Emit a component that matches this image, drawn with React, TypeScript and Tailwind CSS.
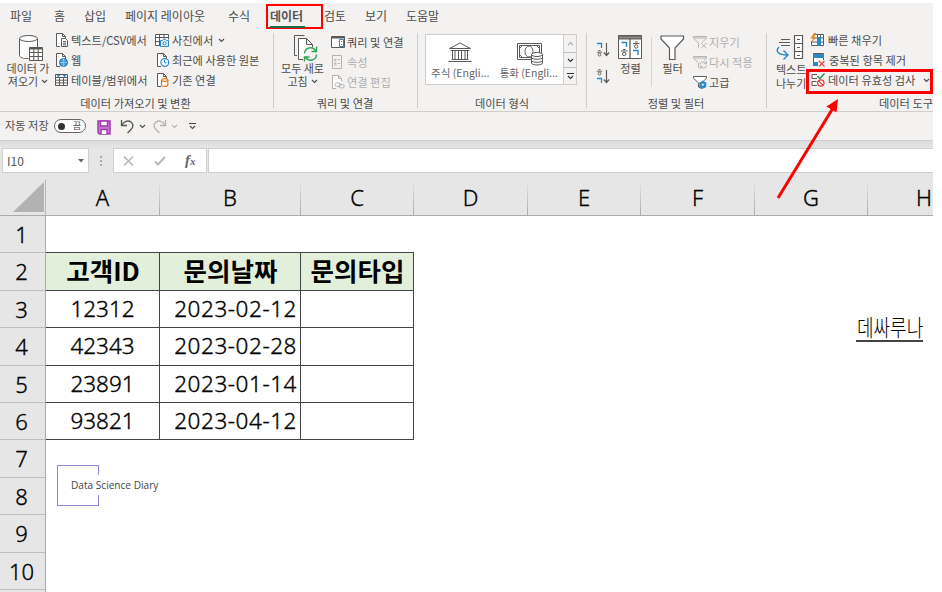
import React from 'react';
import clsx from 'clsx';

interface RibbonGroupProps {
  label: string;
  className?: string;
  labelClassName?: string;
  children: React.ReactNode;
}

interface CommandProps {
  icon: React.ReactNode;
  label: string;
  disabled?: boolean;
  dropdown?: boolean;
  className?: string;
  chevronClassName?: string;
}

const tabs = [
  { label: '파일', className: 'w-[44px] pl-[10px]' },
  { label: '홈', className: 'w-[40px] pl-[10px]' },
  { label: '삽입', className: 'w-[41px]' },
  { label: '페이지 레이아웃', className: 'w-[103px]' },
  { label: '수식', className: 'w-[42px]' },
  { label: '데이터', className: 'w-[54px]' },
  { label: '검토', className: 'w-[41px]' },
  { label: '보기', className: 'w-[41px]' },
  { label: '도움말', className: 'w-[50px]' },
];

const columns = ['A', 'B', 'C', 'D', 'E', 'F', 'G', 'H'];
const header = ['고객ID', '문의날짜', '문의타입'];
const records = [
  ['12312', '2023-02-12', ''],
  ['42343', '2023-02-28', ''],
  ['23891', '2023-01-14', ''],
  ['93821', '2023-04-12', ''],
];

const Chevron = ({ className }: { className?: string }) => (
  <svg className={clsx('shrink-0', className)} width="7" height="5" viewBox="0 0 7 5" fill="none" stroke="currentColor" strokeWidth="1.1">
    <path d="M1 1l2.5 2.5L6 1" />
  </svg>
);

// Page outline with a folded corner, shared by several 14px icons
const PagePath = () => <path d="M5 13.5H1.5V.5h6l3 3v3M7.5.5v3h3" fill="#fff" />;

const SmallIcon = ({ children, disabled }: { children: React.ReactNode; disabled?: boolean }) => (
  <svg
    width="14"
    height="14"
    viewBox="0 0 14 14"
    fill="none"
    stroke={disabled ? '#b5b3b1' : '#5c5a58'}
    strokeWidth="1"
    className="shrink-0"
  >
    {children}
  </svg>
);

const TextCsvIcon = () => (
  <SmallIcon>
    <PagePath />
    <path d="M6.5 5.500h4l2 2v6h-6zM8 8.500h3M8 10.200h3M8 11.900h3" fill="#fff" />
  </SmallIcon>
);

const WebIcon = () => (
  <SmallIcon>
    <PagePath />
    <circle cx="8.500" cy="9.500" r="4" fill="#2b88c8" stroke="#1e7bbd" />
    <path d="M4.800 9.500h7.400M8.500 5.800v7.400M8.500 5.800c-2.300 2.200-2.300 5.200 0 7.400M8.500 5.800c2.300 2.200 2.300 5.200 0 7.400" stroke="#b9dcf2" strokeWidth=".6" />
  </SmallIcon>
);

const TableIcon = () => (
  <SmallIcon>
    <path d="M.5 1.500h12v11H.5zM.5 4.500h12M.5 7.200h12M.5 9.900h12M4.500 4.500v8M8.500 4.500v8" fill="#fff" />
    <path d="M1.500 2h4L3.500 4.200zM7.500 2h4L9.500 4.200z" fill="#2b88c8" stroke="none" />
  </SmallIcon>
);

const PictureIcon = () => (
  <SmallIcon>
    <path d="M5 12.500H.5v-11h13v5M.5 4.500h13M.5 8.500H5M4.500 1.500v11M9 1.500v4" fill="#fff" />
    <path d="M5.500 7.500h2l1-1.200h2l1 1.200h2v6h-8z" fill="#e5f3fb" stroke="#2b88c8" />
    <circle cx="9.500" cy="10.300" r="1.600" stroke="#2b88c8" />
  </SmallIcon>
);

const RecentIcon = () => (
  <SmallIcon>
    <PagePath />
    <circle cx="8.800" cy="9.500" r="3.900" fill="#fff" stroke="#2b88c8" strokeWidth="1.200" />
    <path d="M8.500 7v2.800h2.300" stroke="#2b88c8" />
  </SmallIcon>
);

const ExistingIcon = () => (
  <SmallIcon>
    <PagePath />
    <path d="M5.600 7v5.300c0 1.500 6.200 1.500 6.200 0V7" fill="#fff" stroke="#e8761b" strokeWidth="1.200" />
    <ellipse cx="8.700" cy="7" rx="3.100" ry="1.300" fill="#fff" stroke="#e8761b" strokeWidth="1.200" />
  </SmallIcon>
);

const QueriesIcon = () => (
  <SmallIcon>
    <path d="M.5 1.500h13v11H.5z" fill="#fff" />
    <path d="M.5 2.500h13" strokeWidth="2" />
    <path d="M8.500 4.500h4v7h-4z" fill="#fff" stroke="#2b88c8" />
    <path d="M10.500 6v1M10.500 9v1" stroke="#2b88c8" />
  </SmallIcon>
);

const PropertiesIcon = () => (
  <SmallIcon disabled>
    <path d="M1.500.5h9v13h-9zM3 4.500h2.500M3 8.500h2.500M7 4.500h2M7 8.500h2M3 6h2.500M3 10h2.500" />
  </SmallIcon>
);

const EditLinksIcon = () => (
  <SmallIcon disabled>
    <PagePath />
    <rect x="4" y="8" width="5.500" height="3.400" rx="1.700" />
    <rect x="7.800" y="9.500" width="5.500" height="3.400" rx="1.700" />
  </SmallIcon>
);

const FunnelPath = () => <path d="M.5 1.500h13v1.700L8.500 8v5.500L5.500 12V8L.5 3.200z" fill="#fff" />;

const ClearIcon = () => (
  <SmallIcon disabled>
    <path d="M5.500 12.500V8L.5 3.200V1.500h13v1.700L9 7.500M1 3h12" />
    <path d="M8 8l5.500 5.500M13.500 8L8 13.500" />
  </SmallIcon>
);

const ReapplyIcon = () => (
  <SmallIcon disabled>
    <path d="M5.500 12.500V8L.5 3.200V1.500h13v1.700L11 5.500M1 3h12" />
    <path d="M7 9.500a3.200 3.200 0 0 1 6-1M13.500 6v2.700h-2.700M13.500 10.500a3.200 3.200 0 0 1-6 1M7 14v-2.700h2.700" />
  </SmallIcon>
);

const AdvancedIcon = () => (
  <SmallIcon>
    <FunnelPath />
    <circle cx="9.800" cy="9.800" r="2.500" fill="#fff" stroke="#2b88c8" strokeWidth="2" />
    <path d="M9.800 5.800v8M6.300 7.800l7 4M13.300 7.800l-7 4" stroke="#2b88c8" strokeWidth="1.200" />
    <circle cx="9.800" cy="9.800" r="1" fill="#fff" stroke="none" />
  </SmallIcon>
);

const FlashFillIcon = () => (
  <SmallIcon>
    <path d="M3.500 1.500h10v11H1.500V8M7.500 1.500v11M3.500 5h10M1.500 9h12M10.500 1.500v11" fill="#fff" />
    <path d="M7.500 4.500h3v8h-3z" fill="#2b88c8" stroke="#2b88c8" />
    <path d="M4 0L.5 5.500H3L1 10l5.500-6H4L6.500 0z" fill="#e8861b" stroke="none" />
  </SmallIcon>
);

const DuplicatesIcon = () => (
  <SmallIcon>
    <path d="M2.500.5h10v12h-10z" fill="#fff" />
    <path d="M2 1h11v4H2zM2 9h11v4H2z" fill="#2b88c8" stroke="none" />
    <path d="M7 7h7v7H7z" fill="#f3f2f1" stroke="none" />
    <path d="M8 8l5.500 5.500M13.500 8L8 13.500" stroke="#e8453c" strokeWidth="1.200" />
  </SmallIcon>
);

const ValidationIcon = () => (
  <SmallIcon>
    <path d="M6 1.500H1v4h5M5.500 8.500H1v4h5" />
    <path d="M6.500 3l2.300 2.500L13.500.5" stroke="#218a4a" strokeWidth="1.300" />
    <circle cx="9.800" cy="10" r="3.200" fill="#fff" stroke="#e0352b" strokeWidth="1.200" />
    <path d="M7.600 7.800l4.400 4.400" stroke="#e0352b" strokeWidth="1.200" />
  </SmallIcon>
);

const Command = ({ icon, label, disabled, dropdown, className, chevronClassName = 'ml-[2px]' }: CommandProps) => (
  <div className={clsx('flex h-5 items-center gap-[2px] whitespace-nowrap text-[11.200px] leading-5', disabled ? 'text-[#b1afad]' : 'text-[#4c4c4c]', className)}>
    {icon}
    <span>{label}</span>
    {dropdown && <Chevron className={chevronClassName} />}
  </div>
);

const RibbonGroup = ({ label, className, labelClassName, children }: RibbonGroupProps) => (
  <div className={clsx('flex shrink-0 flex-col overflow-hidden', className)}>
    <div className="flex h-[66px] shrink-0">{children}</div>
    <div className={clsx('h-[15px] whitespace-nowrap text-center text-[11.200px] leading-[15px] text-[#4c4c4c]', labelClassName)}>{label}</div>
  </div>
);

const Divider = () => <div className="my-[3px] w-px shrink-0 bg-[#d0cecc]" />;

const GetDataIcon = () => (
  <svg width="26" height="28" viewBox="0 0 26 28" fill="none" stroke="#5c5a58">
    <path d="M1.500 4.500v17c0 2 4 3 9 3M19.500 4.500V13" fill="#fff" />
    <path d="M2 5v17c2 2 5 2 9 2V14h8V5z" fill="#fff" stroke="none" />
    <ellipse cx="10.500" cy="4.500" rx="9" ry="3" fill="#fff" />
    <path d="M11.500 13.500h13v13h-13z" fill="#fff" />
    <path d="M11.500 14.500h13" strokeWidth="2" />
    <path d="M11.500 18.500h13M11.500 22.500h13M15.800 14v12M20.200 14v12" />
  </svg>
);

const RefreshAllIcon = () => (
  <svg width="26" height="28" viewBox="0 0 26 28" fill="none" stroke="#5c5a58">
    <path d="M4 21.500H1.500V1.500h10" />
    <path d="M10 25.500H5.500V4.500h8l6 6v3M13.500 4.500v6h6" fill="#fff" />
    <path d="M11.500 19.500a6 6 0 0 1 11-3M23.500 12.500v5h-5M23.500 20.500a6 6 0 0 1-11 3M11.500 27.500v-4.500h5" stroke="#35a455" strokeWidth="1.400" />
  </svg>
);

const BankIcon = () => (
  <svg width="24" height="21" viewBox="0 0 24 21" fill="none" stroke="#5c5a58">
    <path d="M1.500 6.500L12 1l10.500 5.500zM2.500 8.500h19M3.500 17.500h17M.5 19.500h23" />
    <path d="M4.500 9v8M7 9v8M10.500 9v8M13.500 9v8M17 9v8M19.500 9v8" />
  </svg>
);

const CurrencyIcon = () => (
  <svg width="27" height="23" viewBox="0 0 27 23" fill="none" stroke="#5c5a58">
    <path d="M.5.500h24v16H.5zM2.500 2.500h20v12h-20z" />
    <ellipse cx="12" cy="8.500" rx="4" ry="5.500" />
    <path d="M2.500 5.500l3-3M2.500 11.500l3 3M19.500 2.500l3 3" />
    <path d="M14.500 12v8c0 2.600 11 2.600 11 0v-8z" fill="#fff" />
    <ellipse cx="20" cy="11.500" rx="5.500" ry="2" fill="#fff" />
    <path d="M14.500 14.500c0 2.400 11 2.400 11 0M14.500 17.500c0 2.400 11 2.400 11 0" />
  </svg>
);

// Two-letter sort glyph: the accent bracket is on top for ascending order
const SortIcon = ({ descending }: { descending?: boolean }) => (
  <svg width="15" height="15" viewBox="0 0 15 15" fill="none" stroke="#5c5a58">
    <path d={descending ? 'M1 9.500h4.500v4.500' : 'M1 1.500h4.500V6'} stroke="#2b88c8" strokeWidth="1.300" />
    <g transform={descending ? 'translate(0 0)' : 'translate(0 8)'} strokeWidth=".9">
      <path d="M2.500.6h2M.8 2.200h5.400" />
      <circle cx="3.500" cy="4.600" r="1.400" />
    </g>
    <path d="M10.500 1v12.500M7.800 10.500l2.700 3 2.700-3" strokeWidth="1.200" />
  </svg>
);

const SortDialogIcon = () => (
  <svg width="25" height="25" viewBox="0 0 25 25" fill="none" stroke="#5c5a58">
    <path d="M.5.500h23v23H.5z" fill="#fff" />
    <path d="M.5 1h23v3H.5z" fill="#8a8886" />
    <path d="M12 4v19.500" strokeWidth="1.300" />
    <path d="M3.500 7.500h5V12M15 15.500h5V20" stroke="#2b88c8" strokeWidth="1.400" />
    <path d="M5 14.500h2.500M3 16h6.500M17 7h2.500M15 8.500h6.500" />
    <circle cx="6.200" cy="19" r="1.700" />
    <circle cx="18.200" cy="11.500" r="1.700" />
  </svg>
);

const FilterIcon = () => (
  <svg width="25" height="26" viewBox="0 0 25 26" fill="none" stroke="#5c5a58" strokeWidth="1.200">
    <path d="M1 1h22.500v3l-8.500 9v11.500H9.500V13L1 4z" fill="#fff" />
  </svg>
);

const TextToColumnsIcon = () => (
  <svg width="28" height="26" viewBox="0 0 28 26" fill="none" stroke="#5c5a58">
    <path d="M5 4.500h9M3 7.500h11M5 10.500h9" />
    <path d="M18.500.5h8v23h-8zM18.500 8.500h8M18.500 16.500h8M21 4.500h3M21 12.500h3M21 20.500h3" fill="#fff" strokeWidth="1.200" />
    <path d="M3 12c-4 4-1 8 8 8M7.500 15.500L12 20l-4.500 4.500" stroke="#2b88c8" strokeWidth="1.400" />
  </svg>
);

const Ribbon = () => (
  <div className="h-[109px] w-[933px] overflow-hidden border-b border-[#d0cecc] bg-[#f3f2f1]">
    <div className="flex h-[27px] whitespace-nowrap text-[12px] leading-[25px] text-[#4c4c4c]">
      {tabs.map((tab) => (
        <div key={tab.label} className={clsx('shrink-0', tab.className)}>
          {tab.label === '데이터' ? (
            <div className="relative ml-[-4px] mt-px h-[25px] w-[57px] border-[2px] border-[#f00] pl-[2px] font-bold leading-[20px] text-[#555]">
              데이터
              <div className="h-[2px] w-[35px] bg-[#1d7044]" />
            </div>
          ) : (
            tab.label
          )}
        </div>
      ))}
    </div>

    <div className="flex h-[81px]">
      <RibbonGroup label="데이터 가져오기 및 변환" className="w-[271px] mr-[2px]">
        <div className="flex w-[55px] shrink-0 flex-col items-center pl-px pt-[4px] text-[11px] leading-[13px] text-[#4c4c4c]">
          <div className="h-[28px] pl-[5px]"><GetDataIcon /></div>
          <span className="whitespace-nowrap">데이터 가</span>
          <span className="flex items-center gap-[3px]">져오기 <Chevron /></span>
        </div>
        <div className="w-[100px] shrink-0">
          <Command icon={<TextCsvIcon />} label="텍스트/CSV에서" />
          <Command icon={<WebIcon />} label="웹" />
          <Command icon={<TableIcon />} label="테이블/범위에서" />
        </div>
        <div>
          <Command icon={<PictureIcon />} label="사진에서" dropdown className="gap-[3px]" />
          <Command icon={<RecentIcon />} label="최근에 사용한 원본" className="pl-px" />
          <Command icon={<ExistingIcon />} label="기존 연결" className="pl-px" />
        </div>
      </RibbonGroup>
      <Divider />
      <RibbonGroup label="쿼리 및 연결" className="w-[142px] mr-px">
        <div className="flex w-[57px] flex-col items-center pt-[4px] text-[11px] leading-[13px] text-[#4c4c4c]">
          <div className="h-[28px] pl-[6px]"><RefreshAllIcon /></div>
          <span className="whitespace-nowrap">모두 새로</span>
          <span className="flex items-center gap-[3px]">고침 <Chevron /></span>
        </div>
        <div className="pt-[2px]">
          <Command icon={<QueriesIcon />} label="쿼리 및 연결" />
          <Command icon={<PropertiesIcon />} label="속성" disabled />
          <Command icon={<EditLinksIcon />} label="연결 편집" disabled />
        </div>
      </RibbonGroup>
      <Divider />
      <RibbonGroup label="데이터 형식" className="w-[168px]">
        <div className="ml-[7px] mt-[4px] flex h-[51px] w-[152px] border border-[#d0cecc] bg-white text-[10.500px] text-[#666]">
          <div className="flex w-[69px] flex-col items-center pt-[7px] leading-[19px]">
            <BankIcon />
            <span className="whitespace-nowrap">주식 (Engli...</span>
          </div>
          <div className="flex w-[69px] flex-col items-center pt-[8px] leading-[14px]">
            <div className="h-[23px] pl-[3px]"><CurrencyIcon /></div>
            <span className="whitespace-nowrap">통화 (Engli...</span>
          </div>
          <div className="flex w-[13px] flex-col border-l border-[#d0cecc] bg-[#f3f2f1] text-[#333]">
            <div className="flex h-[17px] items-center justify-center text-[#b1afad]"><Chevron className="rotate-180" /></div>
            <div className="flex h-4 items-center justify-center border-y border-[#c0bebc]"><Chevron /></div>
            <div className="flex h-4 flex-col items-center justify-center gap-px">
              <div className="h-px w-[7px] bg-[#333]" />
              <Chevron />
            </div>
          </div>
        </div>
      </RibbonGroup>
      <Divider />
      <RibbonGroup label="정렬 및 필터" className="w-[178px] mr-px">
        <div className="flex w-[31px] flex-col gap-[12px] pl-[9px] pt-[12px]">
          <SortIcon />
          <SortIcon descending />
        </div>
        <div className="flex w-[25px] flex-col items-center gap-px pt-[5px] text-[11.200px] leading-[15px] text-[#4c4c4c]">
          <SortDialogIcon />
          <span className="whitespace-nowrap">정렬</span>
        </div>
        <div className="mb-[9px] ml-[8px] mr-[8px] mt-[7px] w-px bg-[#d8d6d4]" />
        <div className="flex w-[25px] flex-col items-center pt-[5px] text-[11.200px] leading-[15px] text-[#4c4c4c]">
          <FilterIcon />
          <span className="whitespace-nowrap">필터</span>
        </div>
        <div className="pl-[8px] pt-[2px]">
          <Command icon={<ClearIcon />} label="지우기" disabled />
          <Command icon={<ReapplyIcon />} label="다시 적용" disabled />
          <Command icon={<AdvancedIcon />} label="고급" />
        </div>
      </RibbonGroup>
      <Divider />
      <RibbonGroup label="데이터 도구" className="w-[166px]" labelClassName="pl-[112px] text-left">
        <div className="flex w-[43px] shrink-0 flex-col pl-[9px] pt-[5px] text-[11px] leading-[14px] text-[#4c4c4c]">
          <TextToColumnsIcon />
          <span className="mt-px whitespace-nowrap">텍스트</span>
          <span className="whitespace-nowrap">나누기</span>
        </div>
        <div className="shrink-0">
          <Command icon={<FlashFillIcon />} label="빠른 채우기" className="gap-[4px]" />
          <Command icon={<DuplicatesIcon />} label="중복된 항목 제거" className="gap-[4px] pl-px" />
          <div className="ml-[-4px] mt-[-1px] h-[25px] w-[127px] border-[3px] border-[#f00]">
            <Command icon={<ValidationIcon />} label="데이터 유효성 검사" dropdown className="mt-[-2px] gap-[3px] pl-[2px]" chevronClassName="ml-[5px]" />
          </div>
        </div>
      </RibbonGroup>
    </div>
  </div>
);

const QuickAccessBar = () => (
  <div className="flex h-[29px] w-[933px] items-center border-b border-[#d0cecc] bg-[#f3f2f1] pl-[5px] text-[#4c4c4c]">
    <span className="mt-[-1px] w-[49px] whitespace-nowrap text-[11.200px]">자동 저장</span>
    <div className="flex h-[14px] w-[32px] items-center justify-between rounded-full border border-[#666] bg-white pl-[3px] pr-[4px] text-[9px]">
      <span className="h-[7px] w-[7px] rounded-full bg-[#333]" />
      <span>끔</span>
    </div>
    <svg className="ml-[11px] mt-[2px]" width="14" height="15" viewBox="0 0 14 15" fill="none" stroke="#a33bb0" strokeWidth="1.500">
      <path d="M1 1h12v13H2.500L1 12.500z" fill="#c77bd0" />
      <path d="M3.500 1h7v5h-7zM4 14v-4.500h6V14" fill="#fff" />
    </svg>
    <svg className="ml-[9px]" width="15" height="15" viewBox="0 0 15 15" fill="none" stroke="#555" strokeWidth="1.300">
      <path d="M1.500 1v5.500H7M1.500 6.500C5 1 9 1.500 11 3c3 2.500 2 5.500 0 7.500L7.500 14" />
    </svg>
    <Chevron className="ml-[4px]" />
    <svg className="ml-[7px]" width="15" height="15" viewBox="0 0 15 15" fill="none" stroke="#b5b3b1" strokeWidth="1.300">
      <path d="M12.500 1v5.500H7M12.500 6.500C9 1 5 1.500 3 3 0 5.500 1 8.500 3 10.500L6.500 14" />
    </svg>
    <Chevron className="ml-[3px] text-[#b5b3b1]" />
    <div className="ml-[11px] flex flex-col items-center gap-px">
      <div className="h-px w-[7px] bg-[#444]" />
      <Chevron />
    </div>
  </div>
);

const FormulaBar = () => (
  <div className="flex h-[39px] w-[933px] bg-[#e6e6e6] bg-linear-to-b from-[#dcdcdc] to-[#e6e6e6] to-20% pl-[2px] pt-[7px]">
    <div className="flex h-[25px] w-[87px] items-center justify-between border border-[#d0d0d0] bg-white pl-[4px] pr-[4px] pt-px text-[12px] text-[#555]">
      I10
      <svg width="6" height="4" viewBox="0 0 6 4"><path d="M0 0h6L3 3.500z" fill="#666" /></svg>
    </div>
    <div className="flex h-[25px] w-[24px] flex-col items-center justify-center gap-[2px]">
      <span className="h-[2px] w-[2px] bg-[#aaa]" />
      <span className="h-[2px] w-[2px] bg-[#aaa]" />
      <span className="h-[2px] w-[2px] bg-[#aaa]" />
    </div>
    <div className="flex h-[25px] w-[94px] items-center border border-[#d0d0d0] bg-white">
      <svg className="ml-[9px]" width="11" height="10" viewBox="0 0 11 10" stroke="#b8b8b8" strokeWidth="1.500"><path d="M1 .5l9 9M10 .5l-9 9" /></svg>
      <svg className="ml-[20px]" width="12" height="10" viewBox="0 0 12 10" fill="none" stroke="#b8b8b8" strokeWidth="2"><path d="M1 5.500L4 8.500 11 1" /></svg>
      <span className="ml-[19px] font-['Liberation_Serif',serif] text-[15px] font-bold italic leading-none text-[#666]">f<span className="text-[11px]">x</span></span>
    </div>
    <div className="ml-[1px] h-[25px] flex-1 border border-r-0 border-[#d0d0d0] bg-white" />
  </div>
);

const Sheet = () => (
  <div className="relative w-[933px] overflow-hidden bg-white font-['Noto_Sans','Noto_Sans_CJK_KR',sans-serif] text-black">
    <div className="grid h-[36px] grid-cols-[46px_114px_141px_113px_114px_113px_114px_113px_113px] border-b border-[#ababab] bg-[#e6e6e6]">
      <div className="flex items-end justify-end border-r border-[#b8b8b8] pb-[3px] pr-px">
        <svg width="31" height="30" viewBox="0 0 31 30"><path d="M31 0v30H0z" fill="#b2b2b2" /></svg>
      </div>
      {columns.map((name) => (
        <div key={name} className="bg-linear-to-t from-[#ababab] to-[#e6e6e6] pr-px">
          <div className="h-full bg-[#e6e6e6] text-center text-[22px] font-light leading-[34px] [-webkit-text-stroke:0.350px_#000]">{name}</div>
        </div>
      ))}
    </div>

    <div className="flex">
      <div className="w-[46px] shrink-0 border-r border-[#ababab] bg-[#e6e6e6]">
        {Array.from({ length: 10 }).map((_, i) => (
          <div key={i} className="h-[37.400px] border-b border-[#bdbdbd] pr-[2px] text-center text-[22px] font-light leading-[37px] [-webkit-text-stroke:0.350px_#000]">
            {i + 1}
          </div>
        ))}
        <div className="h-[37px]" />
      </div>
      <div className="mt-[36.400px] grid h-[188px] w-[368px] grid-cols-[114px_141px_113px] grid-rows-5 border-t border-[#444] text-[22.500px] font-light leading-[35px]">
        {header.map((name) => (
          <div key={name} className="whitespace-nowrap border-b border-r border-[#444] bg-[#e2efda] pl-px text-center font-['Noto_Sans_CJK_KR',sans-serif] text-[25.500px] font-bold leading-[34px]">
            {name}
          </div>
        ))}
        {records.flatMap((record) =>
          record.map((value, i) => (
            <div
              key={`${record[0]}-${i}`}
              className={clsx('border-b border-r border-[#444] [-webkit-text-stroke:0.350px_#000]', i === 0 ? 'text-center' : 'pr-[3px] text-right tracking-[0.550px]')}
            >
              {value}
            </div>
          ))
        )}
      </div>
    </div>

    {/* Floating watermark logo */}
    <div className="absolute left-[57px] top-[285px] h-[41px] w-[42px] border-[1.500px] border-[#9188d4]">
      <div className="absolute left-[13px] top-[9px] h-[20px] whitespace-nowrap bg-white font-['Open_Sans',sans-serif] text-[10.100px] leading-[20px] text-[#444]">
        Data Science Diary
      </div>
    </div>
    <div className="absolute left-[856px] top-[136px] h-[26px] w-[67px] whitespace-nowrap border-b-[2px] border-[#444]">
      <div className="origin-center scale-y-125 pl-px font-['Noto_Sans_CJK_KR',sans-serif] text-[18px] font-light leading-[20px]">데싸루나</div>
    </div>
  </div>
);

const App: React.FC = () => {
  return (
    <div className="relative h-[592px] w-[942px] overflow-hidden bg-white pt-[3px] font-['Noto_Sans_CJK_KR',sans-serif]">
      <Ribbon />
      <QuickAccessBar />
      <FormulaBar />
      <Sheet />

      {/* Callout arrow pointing at the data validation command */}
      <svg className="absolute left-[770px] top-[92px]" width="80" height="112" viewBox="0 0 80 112">
        <path d="M8 106L63 16" stroke="#f00" strokeWidth="3" />
        <path d="M68 7L66.500 20.500 56.500 14.500z" fill="#f00" />
      </svg>
    </div>
  );
};

export default App;
